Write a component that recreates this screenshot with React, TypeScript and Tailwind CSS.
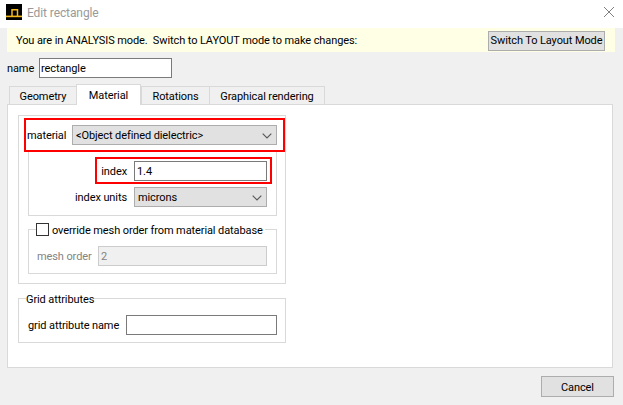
import React from "react";

const Chevron = () => (
  <svg width="10" height="6" viewBox="0 0 10 6" className="shrink-0 mt-[1px]" fill="none">
    <path d="M0.7 0.7 L5 5 L9.3 0.7" stroke="#5a5a5a" strokeWidth="1.2" />
  </svg>
);

const Text = ({ children, className = "" }: { children: React.ReactNode; className?: string }) => (
  <span className={`pt-[2px] whitespace-pre ${className}`}>{children}</span>
);

const Select = ({ w, text }: { w: string; text: string }) => (
  <div className={`${w} h-[20px] bg-[#e1e1e1] border border-[#adadad] flex items-center justify-between pl-[3px] pr-[4px]`}>
    <Text>{text}</Text>
    <Chevron />
  </div>
);

const Tab = ({ label, w, active }: { label: string; w: string; active?: boolean }) =>
  active ? (
    <div className={`${w} h-[21px] -mt-[2px] bg-white border border-b-0 border-[#d9d9d9] flex items-center justify-center relative z-10`}>
      <Text>{label}</Text>
    </div>
  ) : (
    <div className={`${w} h-[19px] bg-[#f0f0f0] border border-b-0 border-l-[#d9d9d9] border-r-0 border-t-[#d9d9d9] flex items-center justify-center`}>
      <Text>{label}</Text>
    </div>
  );

export default function App() {
  return (
    <div className="w-[623px] h-[405px] bg-[#f0f0f0] overflow-hidden flex flex-col text-[11px] leading-[16px] tracking-[-0.1px] text-black font-['Roboto',sans-serif]">
      {/* Title bar */}
      <div className="h-[28px] bg-white flex items-center pl-[6px] pr-[9px] pb-[4px] shrink-0">
        <svg width="16" height="16" viewBox="0 0 16 16" className="shrink-0">
          <rect width="16" height="16" fill="#000" />
          <path d="M6 12 V5.8 H11.5 V12" stroke="#f5b81c" strokeWidth="1.5" fill="none" />
          <rect x="0" y="11.6" width="16" height="1.6" fill="#f5b81c" />
        </svg>
        <Text className="ml-[5px] text-[#999999] text-[12px]">Edit rectangle</Text>
        <svg width="10" height="10" viewBox="0 0 10 10" className="ml-auto" fill="none">
          <path d="M0 0 L10 10 M10 0 L0 10" stroke="#808080" strokeWidth="1" />
        </svg>
      </div>

      {/* Banner */}
      <div className="ml-[7px] w-[608px] h-[24px] bg-[#ffffe6] flex items-center pl-[9px] pr-[10px] pt-[2px] shrink-0">
        <span className="whitespace-pre">You are in ANALYSIS mode.  Switch to LAYOUT mode to make changes:</span>
        <div className="ml-auto w-[117px] h-[20px] bg-[#e1e1e1] border border-[#adadad] flex items-center justify-center whitespace-nowrap">
          Switch To Layout Mode
        </div>
      </div>

      {/* Name */}
      <div className="mt-[6px] pl-[7px] h-[20px] flex items-center shrink-0">
        <Text className="w-[32px]">name</Text>
        <div className="w-[133px] h-[20px] bg-white border border-[#7a7a7a] flex items-center pl-[1px]">
          <Text>rectangle</Text>
        </div>
      </div>

      {/* Tabs */}
      <div className="mt-[8px] pl-[9px] flex h-[19px] shrink-0">
        <Tab label="Geometry" w="w-[67px]" />
        <Tab label="Material" w="w-[65px]" active />
        <Tab label="Rotations" w="w-[68px]" />
        <div className="w-[116px] h-[19px] border border-b-0 border-[#d9d9d9] flex items-center justify-center whitespace-nowrap">
          <Text>Graphical rendering</Text>
        </div>
      </div>

      {/* Panel */}
      <div className="-mt-[1px] ml-[7px] w-[606px] h-[264px] bg-white border border-[#d9d9d9] pl-[10px] pt-[10px] shrink-0">
        {/* Material group */}
        <div className="w-[268px] h-[169px] border border-[#d9d9d9] pl-[5px] pt-[2px]">
          <div className="w-[261px] h-[34px] border-2 border-[#ff0000] flex items-center pl-[1px]">
            <Text className="w-[45px]">material</Text>
            <Select w="w-[205px]" text="<Object defined dielectric>" />
          </div>
          <div className="ml-[4px] w-[249px] h-[64px] border border-t-0 border-[#d9d9d9] pt-[5px]">
            <div className="ml-[66px] w-[177px] h-[27px] border-2 border-[#ff0000] flex items-center pt-[2px] pb-[1px]">
              <Text className="w-[30px] text-right">index</Text>
              <div className="ml-[7px] w-[133px] h-[20px] bg-white border border-[#7a7a7a] flex items-center pl-[2px]">
                <Text>1.4</Text>
              </div>
            </div>
            <div className="mt-[3px] flex items-center">
              <Text className="w-[98px] text-right">index units</Text>
              <div className="ml-[7px]"><Select w="w-[133px]" text="microns" /></div>
            </div>
          </div>
          <div className="ml-[4px] mt-[13px] w-[249px] h-[45px] border border-[#d9d9d9]">
            <div className="-mt-[7px] ml-[7px] w-fit bg-white flex items-start pr-[2px] h-[14px]">
              <div className="w-[13px] h-[13px] border border-[#333333] bg-white mr-[3px]" />
              <span className="whitespace-nowrap">override mesh order from material database</span>
            </div>
            <div className="mt-[9px] ml-[8px] flex items-center text-[#838383]">
              <Text className="w-[61px]">mesh order</Text>
              <div className="w-[169px] h-[20px] bg-[#f0f0f0] border border-[#cccccc] flex items-center pl-[2px]">
                <Text>2</Text>
              </div>
            </div>
          </div>
        </div>

        {/* Grid attributes */}
        <div className="mt-[14px] w-[268px] h-[45px] border border-[#d9d9d9]">
          <div className="-mt-[8px] ml-[7px] w-fit bg-white h-[16px] pt-[1px]">Grid attributes</div>
          <div className="mt-[8px] ml-[9px] flex items-center h-[20px]">
            <Text className="w-[98px]">grid attribute name</Text>
            <div className="w-[151px] h-[20px] bg-white border border-[#7a7a7a]" />
          </div>
        </div>
      </div>

      {/* Footer */}
      <div className="mt-[8px] pl-[541px] shrink-0">
        <div className="w-[73px] h-[21px] bg-[#e1e1e1] border border-[#adadad] flex items-center justify-center">
          <Text>Cancel</Text>
        </div>
      </div>
    </div>
  );
}
